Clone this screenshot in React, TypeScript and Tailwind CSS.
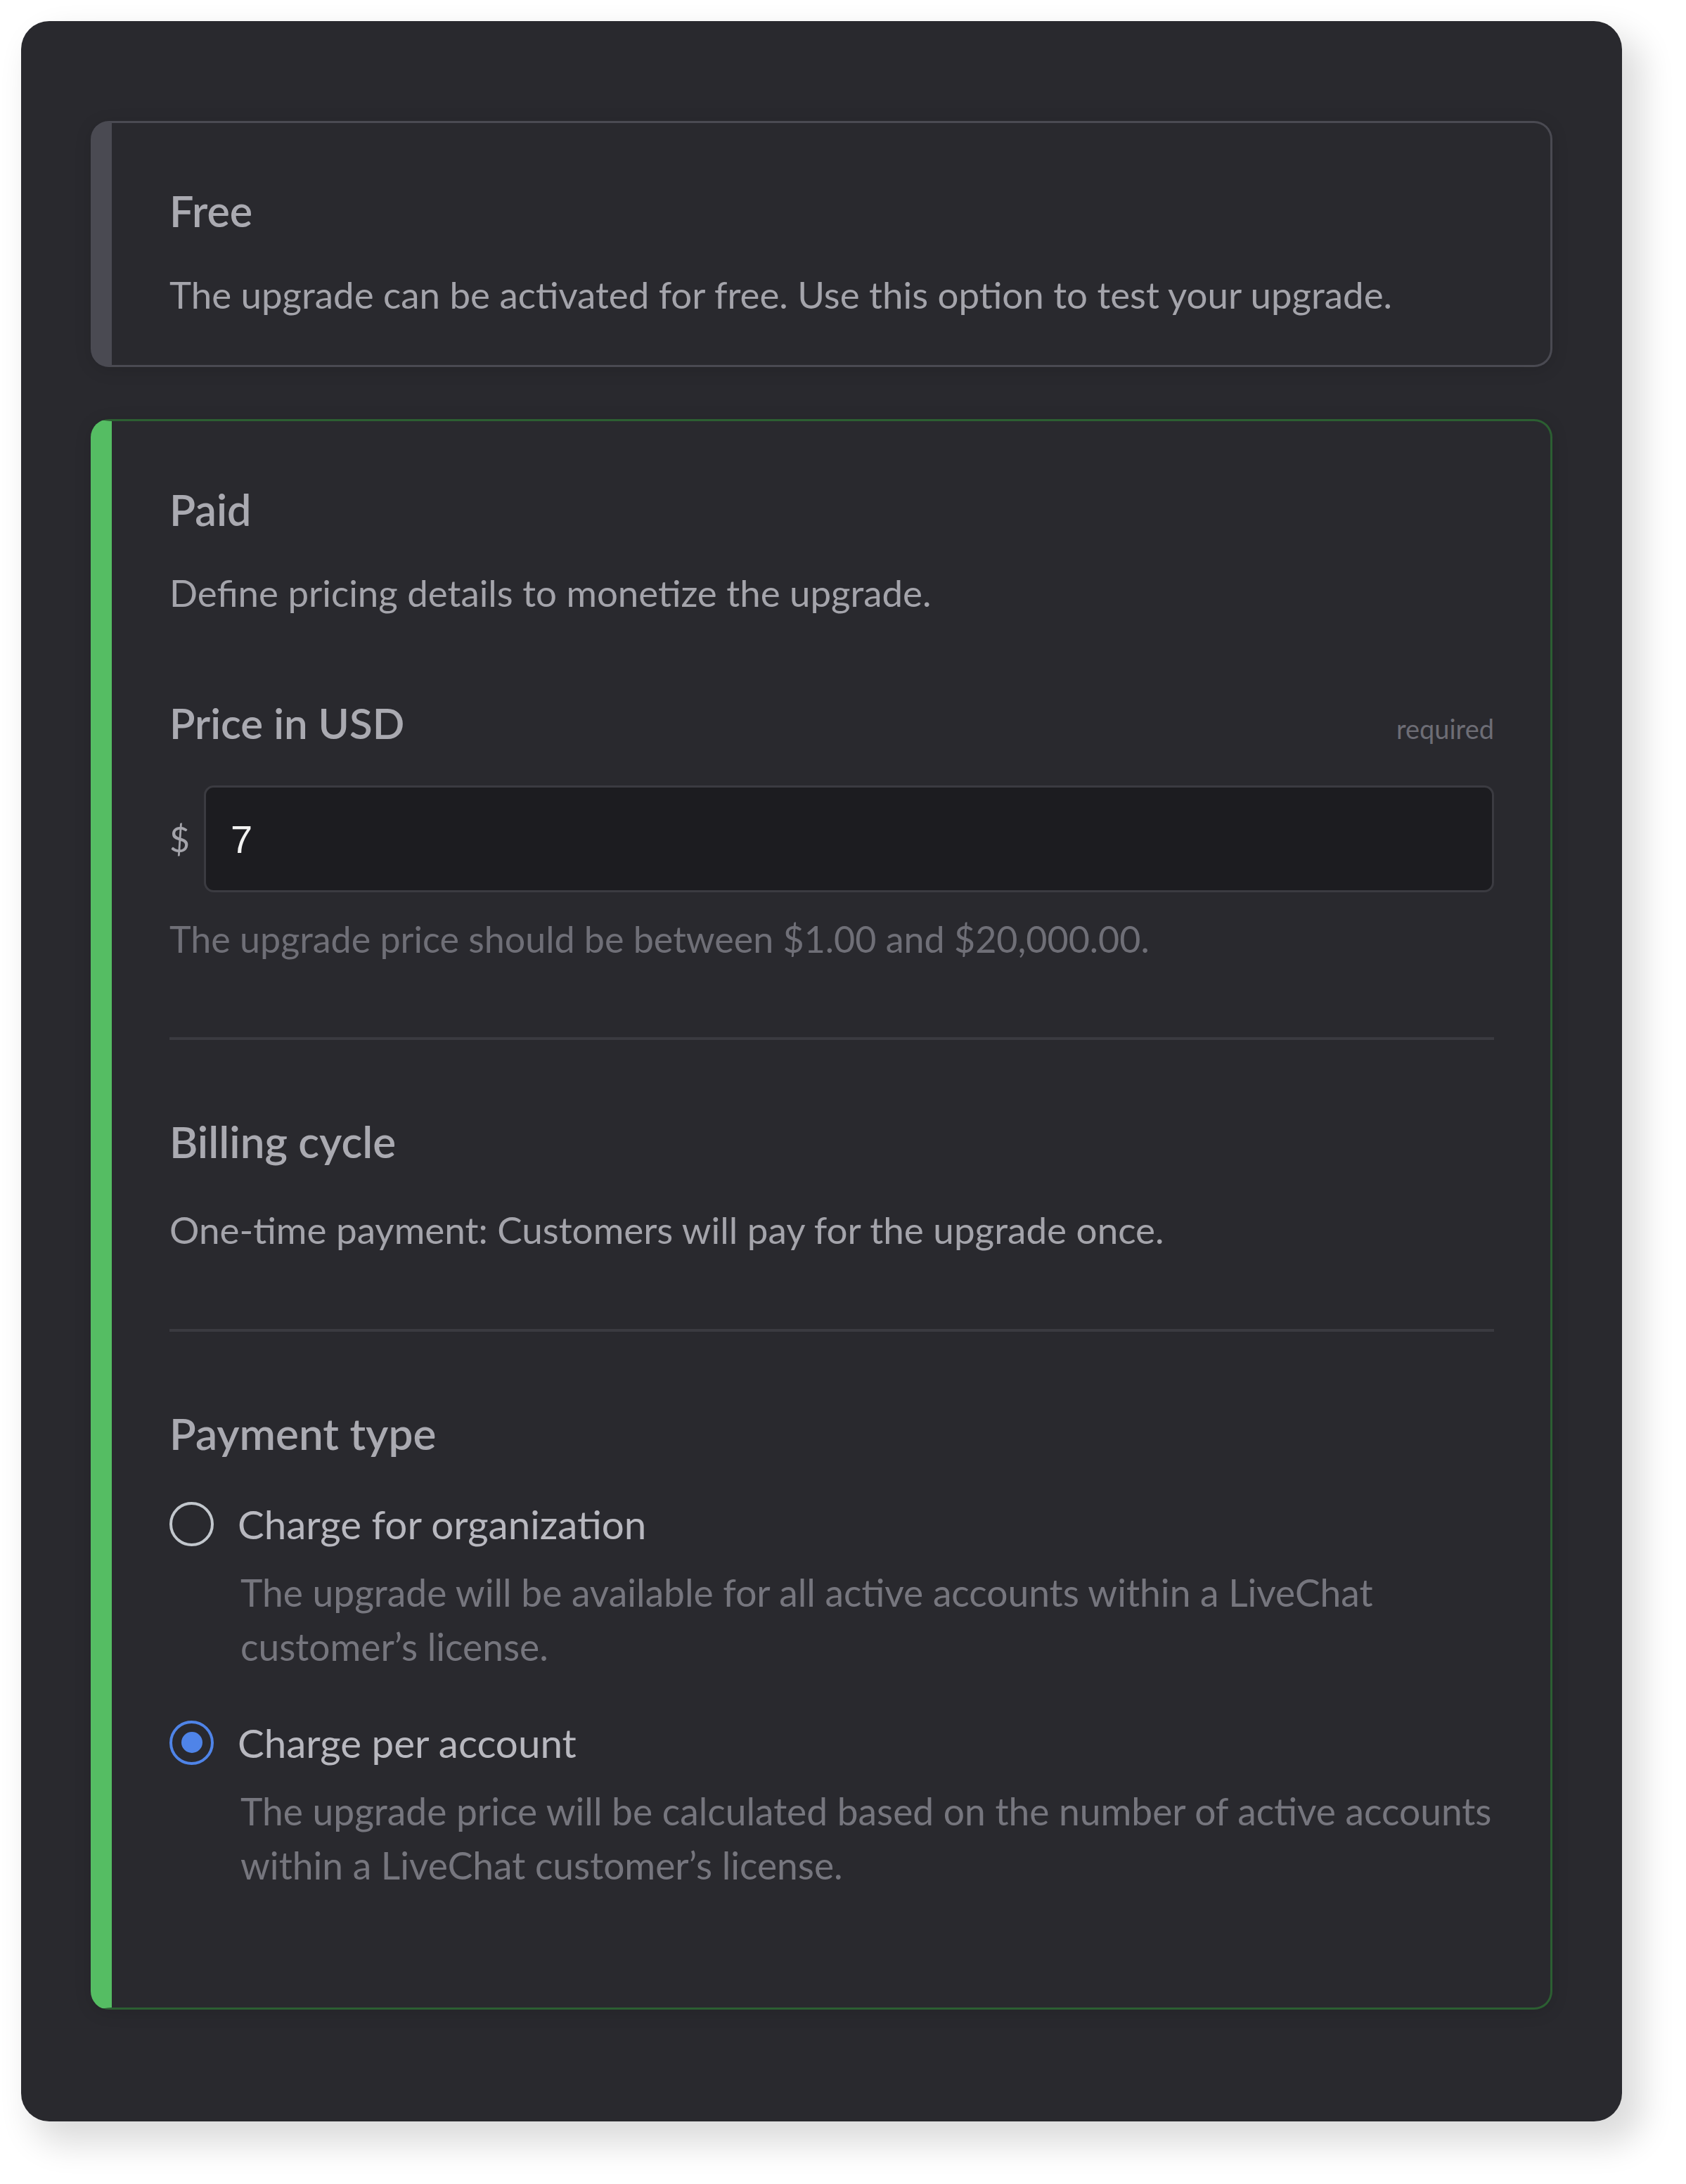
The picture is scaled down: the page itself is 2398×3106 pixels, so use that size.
import React, { useState } from 'react';

interface RadioOptionProps {
  label: string;
  description: string;
  checked: boolean;
  onSelect: () => void;
}

function RadioOption({ label, description, checked, onSelect }: RadioOptionProps) {
  return (
    <button type="button" onClick={onSelect} className="flex flex-col items-start text-left">
      <div className="flex items-center gap-[34px]">
        {checked ? (
          <span className="flex h-[63px] w-[63px] shrink-0 items-center justify-center rounded-full border-[4px] border-[#4f84e8]">
            <span className="h-[30px] w-[30px] rounded-full bg-[#4f84e8]" />
          </span>
        ) : (
          <span className="h-[63px] w-[63px] shrink-0 rounded-full border-[4px] border-[#c2c7cd]" />
        )}
        <span className="text-[56.5px] leading-[80px] text-[#b8b8bf]">{label}</span>
      </div>
      <p className="mt-[19px] pl-[101px] text-[53.3px] leading-[77px] text-[#76767e]">{description}</p>
    </button>
  );
}

export default function App() {
  const [price, setPrice] = useState('7');
  const [paymentType, setPaymentType] = useState<'org' | 'account'>('account');

  return (
    <div className="min-h-screen bg-white pl-[30px] pt-[30px] pb-[92px] font-['Lato','Noto_Sans',sans-serif]">
      <div className="w-[2277px] rounded-[40px] bg-[#29292e] px-[99px] pt-[142px] pb-[159px] shadow-[22px_26px_48px_6px_rgba(0,0,0,0.14)]">
        {/* Free */}
        <div className="rounded-[26px] border-[3px] border-l-[30px] border-[#4a4a52] pl-[82px] pr-[80px] pt-[85px] pb-[62px] shadow-[0_4px_24px_rgba(0,0,0,0.12)]">
          <h2 className="text-[61px] font-semibold leading-[80px] text-[#aaaab1]">Free</h2>
          <p className="mt-[41px] text-[52.8px] leading-[76px] text-[#a4a4ab]">
            The upgrade can be activated for free. Use this option to test your upgrade.
          </p>
        </div>

        {/* Paid */}
        <div className="mt-[74px] rounded-[26px] border-[3px] border-l-[30px] border-[#2c5f32] border-l-[#55bd63] pl-[82px] pr-[80px] pt-[86px] pb-[164px] shadow-[0_4px_24px_rgba(0,0,0,0.12)]">
          <h2 className="text-[61px] font-semibold leading-[80px] text-[#aaaab1]">Paid</h2>
          <p className="mt-[40px] text-[52.8px] leading-[76px] text-[#a4a4ab]">
            Define pricing details to monetize the upgrade.
          </p>

          {/* Price */}
          <div className="mt-[107px] flex items-baseline justify-between">
            <h3 className="text-[60px] font-semibold leading-[80px] text-[#aaaab1]">Price in USD</h3>
            <span className="text-[38px] leading-[80px] text-[#6d6d75]">required</span>
          </div>
          <div className="mt-[41px] flex items-center gap-[20px]">
            <span className="text-[50px] text-[#a4a4ab]">$</span>
            <input
              value={price}
              onChange={(e) => setPrice(e.target.value)}
              className="h-[152px] flex-1 rounded-[14px] border-[3px] border-[#3b3b41] bg-[#1c1c20] pl-[35px] font-['Liberation_Sans',sans-serif] text-[56px] text-[#f2f2f2] outline-none"
            />
          </div>
          <p className="mt-[28px] text-[52px] leading-[76px] text-[#6f6f77]">
            The upgrade price should be between $1.00 and $20,000.00.
          </p>

          <div className="mt-[102px] h-[4px] bg-[#3a3a40]" />

          {/* Billing cycle */}
          <h3 className="mt-[104px] text-[62px] font-semibold leading-[80px] text-[#aaaab1]">Billing cycle</h3>
          <p className="mt-[48px] text-[53px] leading-[76px] text-[#a4a4ab]">
            One-time payment: Customers will pay for the upgrade once.
          </p>

          <div className="mt-[103px] h-[4px] bg-[#3a3a40]" />

          {/* Payment type */}
          <h3 className="mt-[104px] text-[62px] font-semibold leading-[80px] text-[#aaaab1]">Payment type</h3>
          <div className="mt-[49px] flex flex-col gap-[58px]">
            <RadioOption
              label="Charge for organization"
              description="The upgrade will be available for all active accounts within a LiveChat customer’s license."
              checked={paymentType === 'org'}
              onSelect={() => setPaymentType('org')}
            />
            <RadioOption
              label="Charge per account"
              description="The upgrade price will be calculated based on the number of active accounts within a LiveChat customer’s license."
              checked={paymentType === 'account'}
              onSelect={() => setPaymentType('account')}
            />
          </div>
        </div>
      </div>
    </div>
  );
}
